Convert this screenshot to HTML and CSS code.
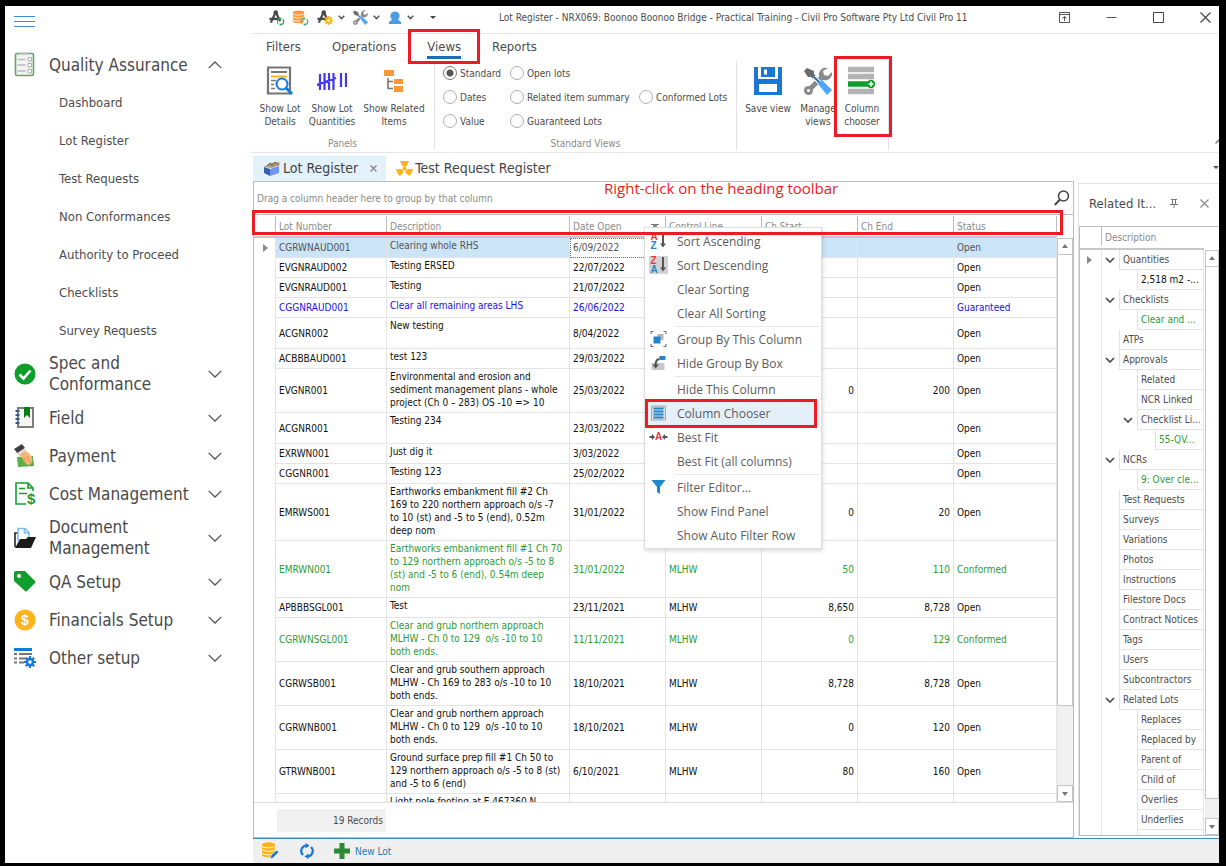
FILE: index.html
```html
<!DOCTYPE html>
<html lang="en">
<head>
    <meta charset="UTF-8">
    <meta name="viewport" content="width=device-width, initial-scale=1.0">
    <title>Lot Register - Civil Pro</title>
    <link rel="stylesheet" href="styles.css">
</head>
<body>
    <!-- shared symbols -->
    <svg class="symbols" width="0" height="0">
        <symbol id="chev" viewBox="0 0 14 8"><path d="M0.7 0.9 7 7l6.300-6.100" fill="none" stroke="#555" stroke-width="1.300"/></symbol>
        <symbol id="caret" viewBox="0 0 7 5"><path d="M0.700 0.800 3.500 3.600 6.300 0.800" fill="none" stroke="#555" stroke-width="1.500"/></symbol>
        <symbol id="tree-chev" viewBox="0 0 10 6"><path d="M1 1l4 4 4-4" fill="none" stroke="#444" stroke-width="1.600"/></symbol>
        <symbol id="compass" viewBox="0 0 16 16">
            <path d="M6.800 3 2 13.500M7.500 3l4.500 9M0.500 9.500h11" stroke="#4a4a4a" stroke-width="2.400" fill="none"/>
            <circle cx="7.200" cy="2.800" r="2.500" fill="#4a4a4a"/>
        </symbol>
        <symbol id="tools" viewBox="0 0 28 28">
            <path d="M4 24 18 10" stroke="#8a8a8a" stroke-width="5"/>
            <path d="M24 1a7 7 0 0 0-9 8l4 4a7 7 0 0 0 9-8l-4 4-4-1-1-4z" fill="#8a8a8a"/>
            <circle cx="4.500" cy="23.500" r="4.500" fill="#8a8a8a"/><circle cx="4.500" cy="23.500" r="1.500" fill="#fff"/>
            <path d="M0 4 3 1l7 3v3l3 3-3 3-3-3H4z" fill="#6b6b6b"/>
            <path d="M10 10l8 8" stroke="#fff" stroke-width="4"/>
            <path d="M10 10l8 8" stroke="#1f6fc0" stroke-width="2"/>
            <path d="M14 17l4-4 10 10-5 5z" fill="#4fa8ff"/>
        </symbol>
        <symbol id="database" viewBox="0 0 14 16">
            <path d="M0 2.500v10.500c0 3 13 3 13 0V2.500z" fill="currentColor"/>
            <ellipse cx="6.500" cy="2.500" rx="6.500" ry="2.200" fill="currentColor"/>
            <path d="M0 4c1 2.300 12 2.300 13 0M0 7.500c1 2.300 12 2.300 13 0M0 11c1 2.300 12 2.300 13 0" fill="none" stroke="#fff" stroke-width="0.900"/>
        </symbol>
        <symbol id="refresh" viewBox="0 0 16 16">
            <path d="M7 2.500a5.500 5.500 0 0 0-3 9.500M9 13.500a5.500 5.500 0 0 0 3-9.500" fill="none" stroke="currentColor" stroke-width="2.200"/>
            <path d="M6.500 0v5.500L10.500 2.500zM9.500 16v-5.500L5.500 13.500z" fill="currentColor"/>
        </symbol>
        <symbol id="gear" viewBox="0 0 12 12">
            <path d="M6 0v12M0 6h12M1.800 1.800l8.400 8.400M10.200 1.800l-8.400 8.400" stroke="currentColor" stroke-width="2.200"/>
            <circle cx="6" cy="6" r="4.200" fill="currentColor"/><circle cx="6" cy="6" r="1.800" fill="#fff"/>
        </symbol>
    </svg>

    <div class="window">
        <nav class="sidebar">
            <button class="hamburger" aria-label="Menu"><i></i><i></i><i></i></button>
            <a class="nav-item" href="#">
                <svg width="22" height="26" viewBox="0 0 22 26"><rect x="1.500" y="1.500" width="18" height="22" rx="1.500" fill="#f3f3f3" stroke="#5fa86a" stroke-width="1.600"/><path d="M6 1.500h9" stroke="#bbb" stroke-width="2"/><path d="M3.500 7.500h8M3.500 13h8M3.500 19h8" stroke="#bbb" stroke-width="1.600"/><path d="M14 5.500h3.500v3.500H14zM14 11.500h3.500V15H14zM14 17.500h3.500V21H14z" fill="#fff" stroke="#aaa"/></svg>
                <span>Quality Assurance</span>
                <svg class="chev up" width="14" height="8"><use href="#chev"/></svg>
            </a>
            <div class="sub-nav">
                <a href="#">Dashboard</a>
                <a href="#">Lot Register</a>
                <a href="#">Test Requests</a>
                <a href="#">Non Conformances</a>
                <a href="#">Authority to Proceed</a>
                <a href="#">Checklists</a>
                <a href="#">Survey Requests</a>
            </div>
            <a class="nav-item tall" href="#">
                <svg width="22" height="22" viewBox="0 0 22 22"><circle cx="11" cy="11" r="10.500" fill="#0f9d2c"/><path d="M5.500 11.500l4 4 7-8" fill="none" stroke="#fff" stroke-width="2.600"/></svg>
                <span>Spec and Conformance</span>
                <svg class="chev" width="14" height="8"><use href="#chev"/></svg>
            </a>
            <a class="nav-item" href="#">
                <svg width="22" height="24" viewBox="0 0 22 24"><rect x="4" y="2" width="15" height="19" fill="#f6f6f6" stroke="#7d7d7d" stroke-width="2"/><path d="M10 1h6v11l-3-3-3 3z" fill="#087d14"/><path d="M1.500 5h4M1.500 9h4M1.500 13h4M1.500 17h4" stroke="#2b5f8c" stroke-width="2"/></svg>
                <span>Field</span>
                <svg class="chev" width="14" height="8"><use href="#chev"/></svg>
            </a>
            <a class="nav-item" href="#">
                <svg width="22" height="24" viewBox="0 0 22 24"><path d="M3 13l16-1 1 10-16 1z" fill="#58b048"/><path d="M4 10l5-4c4 1 8 4 9 8 1 4-1 7-4 7-3-1-4-3-5-6z" fill="#f7b778"/><path d="M10 13l2 7M13 12l3 7" stroke="#d98b48" stroke-width="0.800"/><path d="M0 5 8 0l3 4-7 6z" fill="#3c3c44"/><path d="M3 9l8-5 1 2-7 5z" fill="#ddd"/></svg>
                <span>Payment</span>
                <svg class="chev" width="14" height="8"><use href="#chev"/></svg>
            </a>
            <a class="nav-item" href="#">
                <svg width="22" height="24" viewBox="0 0 22 24"><path d="M12 22H2V1h12l5 5v3M14 1v5h5M5 6.500h6M5 11.500h8" fill="none" stroke="#15a032" stroke-width="1.600"/><text x="13" y="22" class="dollar-green">$</text></svg>
                <span>Cost Management</span>
                <svg class="chev" width="14" height="8"><use href="#chev"/></svg>
            </a>
            <a class="nav-item tall" href="#">
                <svg width="22" height="22" viewBox="0 0 22 22"><path d="M1 20V6h3" fill="none" stroke="#222" stroke-width="1.600"/><path d="M4 14V1.500h7l4 4V14" fill="#fff" stroke="#7fbdf0" stroke-width="1.600"/><path d="M10.500 1v5h5" fill="none" stroke="#7fbdf0" stroke-width="1.600"/><path d="M1 21l5-9h6l2-2h8l-5 11z" fill="#1c1c1c"/></svg>
                <span>Document Management</span>
                <svg class="chev" width="14" height="8"><use href="#chev"/></svg>
            </a>
            <a class="nav-item" href="#">
                <svg width="22" height="22" viewBox="0 0 22 22"><path d="M0 2Q0 0 2 0h9l10 10q1 1 0 2l-8 8q-1 1-2 0L0 10z" fill="#0f9d2c"/><circle cx="5" cy="5" r="2" fill="#fff"/></svg>
                <span>QA Setup</span>
                <svg class="chev" width="14" height="8"><use href="#chev"/></svg>
            </a>
            <a class="nav-item" href="#">
                <svg width="22" height="22" viewBox="0 0 22 22"><circle cx="11" cy="11" r="10.500" fill="#fcb31c"/><text x="11" y="16" text-anchor="middle" class="dollar-white">$</text></svg>
                <span>Financials Setup</span>
                <svg class="chev" width="14" height="8"><use href="#chev"/></svg>
            </a>
            <a class="nav-item" href="#">
                <svg width="22" height="22" viewBox="0 0 22 22"><path d="M0 2.500h18" stroke="#1878d8" stroke-width="3"/><path d="M0 7h3M5 7h13M0 11.500h3M5 11.500h7M0 15.500h3M5 15.500h5" stroke="#777" stroke-width="2.200"/><svg x="10" y="9" width="12" height="12" color="#1878d8"><use href="#gear"/></svg></svg>
                <span>Other setup</span>
                <svg class="chev" width="14" height="8"><use href="#chev"/></svg>
            </a>
        </nav>

        <main class="main">
            <header class="titlebar">
                <div class="quick">
                    <button aria-label="Sync"><svg width="16" height="16" viewBox="0 0 16 16"><use href="#compass" width="15" height="15"/><svg x="7" y="7" width="9" height="9" color="#2aa84a"><use href="#refresh"/></svg></svg></button>
                    <button aria-label="Reload data"><svg width="16" height="16" viewBox="0 0 16 16"><svg width="12" height="14" color="#ff9a3c"><use href="#database"/></svg><svg x="7" y="7" width="9" height="9" color="#46ad68"><use href="#refresh"/></svg></svg></button>
                    <button class="drop" aria-label="Settings"><svg width="16" height="16" viewBox="0 0 16 16"><use href="#compass" width="15" height="15"/><svg x="7" y="6" width="9" height="9" color="#fcb31c"><use href="#gear"/></svg></svg><svg width="7" height="5"><use href="#caret"/></svg></button>
                    <button class="drop" aria-label="Tools"><svg width="15" height="15"><use href="#tools"/></svg><svg width="7" height="5"><use href="#caret"/></svg></button>
                    <button class="drop" aria-label="User"><svg width="14" height="14" viewBox="0 0 14 14"><circle cx="7" cy="5" r="4.600" fill="#4a9ce0"/><path d="M1 13v-2l4-3h4l4 3v2z" fill="#4a9ce0"/></svg><svg width="7" height="5"><use href="#caret"/></svg></button>
                    <button class="more" aria-label="Customise"><svg width="6" height="3" viewBox="0 0 6 3"><path d="M0 0h6L3 3z" fill="#444"/></svg></button>
                </div>
                <h1>Lot Register - NRX069: Boonoo Boonoo Bridge - Practical Training - Civil Pro Software Pty Ltd Civil Pro 11</h1>
                <div class="win-buttons">
                    <button aria-label="Ribbon options"><svg width="11" height="11" viewBox="0 0 11 11"><path d="M0.500 0.500h10v10H.5zM0.500 2.500h10M5.500 9V4.500M3.500 6.500l2-2 2 2" fill="none" stroke="#555"/></svg></button>
                    <button aria-label="Minimise"><svg width="11" height="11" viewBox="0 0 11 11"><path d="M0.500 5.500h10" stroke="#555"/></svg></button>
                    <button aria-label="Maximise"><svg width="11" height="11" viewBox="0 0 11 11"><path d="M0.500 0.500h10v10H.5z" fill="none" stroke="#444"/></svg></button>
                    <button aria-label="Close"><svg width="11" height="11" viewBox="0 0 11 11"><path d="M0.500 0.500l10 10M10.500 0.500l-10 10" stroke="#444" stroke-width="1.200"/></svg></button>
                </div>
            </header>

            <div class="ribbon-tabs">
                <a href="#">Filters</a>
                <a href="#">Operations</a>
                <a href="#" class="active">Views<b class="mark mark-views"></b></a>
                <a href="#">Reports</a>
            </div>

            <div class="ribbon">
                <section class="group">
                    <div class="group-body">
                        <button class="big">
                            <svg width="28" height="30" viewBox="0 0 28 30"><path d="M2 1.500h22v26H2z" fill="#fff" stroke="#757575" stroke-width="2.200"/><path d="M5 6h16" stroke="#777" stroke-width="2"/><path d="M5 10.500h16" stroke="#fcb31c" stroke-width="2"/><path d="M5 14.500h5M5 18.500h3M5 22.500h4" stroke="#777" stroke-width="1.600"/><circle cx="16" cy="18" r="5.500" fill="#fff" stroke="#1878d8" stroke-width="2"/><path d="M20 22l6 6" stroke="#1878d8" stroke-width="3"/></svg>
                            <span>Show Lot<br>Details</span>
                        </button>
                        <button class="big">
                            <svg width="30" height="30" viewBox="0 0 30 30"><path d="M3 8v16M7.500 7v17M12 7v17M16.500 7v17M24 7v14M29 7v14M0 19l19-7" fill="none" stroke="#4338f0" stroke-width="2.200"/></svg>
                            <span>Show Lot<br>Quantities</span>
                        </button>
                        <button class="big wide">
                            <svg width="20" height="30" viewBox="0 0 20 30"><path d="M0 4h10v6H0zM10 13h9v5h-9zM10 20h9v6h-9z" fill="#fb963a"/><path d="M4 12v11M4 15.500h5M4 22.500h5" fill="none" stroke="#777" stroke-width="1.600"/></svg>
                            <span>Show Related<br>Items</span>
                        </button>
                    </div>
                    <div class="group-label">Panels</div>
                </section>
                <section class="group">
                    <div class="group-body radios">
                        <label><input type="radio" name="view" checked>Standard</label>
                        <label><input type="radio" name="view">Open lots</label>
                        <span></span>
                        <label><input type="radio" name="view">Dates</label>
                        <label><input type="radio" name="view">Related item summary</label>
                        <label><input type="radio" name="view">Conformed Lots</label>
                        <label><input type="radio" name="view">Value</label>
                        <label><input type="radio" name="view">Guaranteed Lots</label>
                    </div>
                    <div class="group-label">Standard Views</div>
                </section>
                <section class="group">
                    <div class="group-body">
                        <button class="big medium">
                            <svg width="28" height="30" viewBox="0 0 28 30"><path d="M0 1h28v28H0z" fill="#1878d8"/><path d="M4 0h20v13H4zM5 18h18v8H5z" fill="#fff"/><path d="M7 1h14v10H7z" fill="#1878d8"/><path d="M10 3.500h3v5h-3z" fill="#fff"/></svg>
                            <span>Save view</span>
                        </button>
                        <button class="big narrow">
                            <svg width="28" height="30"><use href="#tools"/></svg>
                            <span>Manage<br>views</span>
                        </button>
                        <button class="big narrow">
                            <svg width="28" height="30" viewBox="0 0 28 30"><path d="M0 3.500h26M0 10.500h26M0 25.500h26" stroke="#b3b3b3" stroke-width="5.500"/><path d="M0 18h20" stroke="#0f9d2c" stroke-width="5.500"/><circle cx="23" cy="18" r="4.200" fill="#0f9d2c"/><path d="M23 15.500v5M20.500 18h5" stroke="#fff" stroke-width="1.600"/></svg>
                            <span>Column<br>chooser</span>
                            <b class="mark mark-chooser"></b>
                        </button>
                    </div>
                </section>
                <svg class="collapse" width="9" height="6" viewBox="0 0 9 6"><path d="M0.500 5.500l4-4 4 4" fill="none" stroke="#777" stroke-width="1.400"/></svg>
            </div>

            <div class="doc-tabs">
                <a href="#" class="active">
                    <svg width="18" height="16" viewBox="0 0 18 16"><path d="M1 6l6-4 9-1 1 3-8 3z" fill="#b59b7a"/><path d="M4 5l3-3 2 3 3-4 3 3" fill="none" stroke="#75614a"/><path d="M1 6l6 2v7l-6-3z" fill="#3c5fb0"/><path d="M7 8l9-3v7l-9 3z" fill="#6f97f2"/></svg>
                    Lot Register
                    <svg class="close" width="7" height="7" viewBox="0 0 7 7"><path d="M0.500 0.500l6 6M6.500 0.500l-6 6" stroke="#888" stroke-width="1.400"/></svg>
                </a>
                <a href="#">
                    <svg width="17" height="17" viewBox="0 0 17 17"><circle cx="8.500" cy="8.500" r="2" fill="#fcb31c"/><path d="M4 1h9l-2.500 5.500h-4zM0 9h5.500L8 12l-4 4Q1 14 0 9zM17 9h-5.500L9 12l4 4Q16 14 17 9z" fill="#fcb31c"/></svg>
                    Test Request Register
                </a>
                <svg class="tab-menu" width="6" height="3" viewBox="0 0 6 3"><path d="M0 0h6L3 3z" fill="#555"/></svg>
            </div>

            <div class="workspace">
                <section class="lots">
                    <div class="group-panel">
                        <span>Drag a column header here to group by that column</span>
                        <p class="note">Right-click on the heading toolbar</p>
                        <button class="find" aria-label="Find"><svg width="16" height="16" viewBox="0 0 16 16"><circle cx="9.500" cy="6" r="5" fill="none" stroke="#444" stroke-width="1.500"/><path d="M6 9.500.8 15" stroke="#444" stroke-width="2"/></svg></button>
                    </div>
                    <div class="table-area">
                        <div class="table-clip">
                            <table class="lot-table">
                                <colgroup><col class="c-mark"><col class="c-lot"><col><col class="c-std"><col class="c-std"><col class="c-std"><col class="c-std"><col class="c-status"></colgroup>
                                <thead>
                                    <tr>
                                        <th><span></span></th>
                                        <th><span>Lot Number</span></th>
                                        <th><span>Description</span></th>
                                        <th><span class="sorted">Date Open</span></th>
                                        <th><span>Control Line</span></th>
                                        <th><span>Ch Start</span></th>
                                        <th><span>Ch End</span></th>
                                        <th><span>Status</span></th>
                                    </tr>
                                </thead>
                                <tbody>
                                    <tr class="selected"><td><i class="pointer"></i></td><td>CGRWNAUD001</td><td>Clearing whole RHS</td><td class="focus">6/09/2022</td><td></td><td></td><td></td><td>Open</td></tr>
                                    <tr><td></td><td>EVGNRAUD002</td><td>Testing ERSED</td><td>22/07/2022</td><td></td><td></td><td></td><td>Open</td></tr>
                                    <tr><td></td><td>EVGNRAUD001</td><td>Testing</td><td>21/07/2022</td><td></td><td></td><td></td><td>Open</td></tr>
                                    <tr class="guaranteed"><td></td><td>CGGNRAUD001</td><td>Clear all remaining areas LHS</td><td>26/06/2022</td><td></td><td></td><td></td><td>Guaranteed</td></tr>
                                    <tr class="two-line"><td></td><td>ACGNR002</td><td>New testing</td><td>8/04/2022</td><td></td><td></td><td></td><td>Open</td></tr>
                                    <tr><td></td><td>ACBBBAUD001</td><td>test 123</td><td>29/03/2022</td><td></td><td></td><td></td><td>Open</td></tr>
                                    <tr><td></td><td>EVGNR001</td><td>Environmental and erosion and<br>sediment management plans - whole<br>project (Ch 0 – 283) OS -10 =&gt; 10</td><td>25/03/2022</td><td></td><td>0</td><td>200</td><td>Open</td></tr>
                                    <tr class="two-line"><td></td><td>ACGNR001</td><td>Testing 234</td><td>23/03/2022</td><td></td><td></td><td></td><td>Open</td></tr>
                                    <tr><td></td><td>EXRWN001</td><td>Just dig it</td><td>3/03/2022</td><td></td><td></td><td></td><td>Open</td></tr>
                                    <tr><td></td><td>CGGNR001</td><td>Testing 123</td><td>25/02/2022</td><td></td><td></td><td></td><td>Open</td></tr>
                                    <tr><td></td><td>EMRWS001</td><td>Earthworks embankment fill #2 Ch<br>169 to 220 northern approach o/s -7<br>to 10 (st) and -5 to 5 (end), 0.52m<br>deep nom</td><td>31/01/2022</td><td></td><td>0</td><td>20</td><td>Open</td></tr>
                                    <tr class="conformed"><td></td><td>EMRWN001</td><td>Earthworks embankment fill #1 Ch 70<br>to 129 northern approach o/s -5 to 8<br>(st) and -5 to 6 (end), 0.54m deep<br>nom</td><td>31/01/2022</td><td>MLHW</td><td>50</td><td>110</td><td>Conformed</td></tr>
                                    <tr><td></td><td>APBBBSGL001</td><td>Test</td><td>23/11/2021</td><td>MLHW</td><td>8,650</td><td>8,728</td><td>Open</td></tr>
                                    <tr class="conformed"><td></td><td>CGRWNSGL001</td><td>Clear and grub northern approach<br>MLHW - Ch 0 to 129&nbsp; o/s -10 to 10<br>both ends.</td><td>11/11/2021</td><td>MLHW</td><td>0</td><td>129</td><td>Conformed</td></tr>
                                    <tr><td></td><td>CGRWSB001</td><td>Clear and grub southern approach<br>MLHW - Ch 169 to 283 o/s -10 to 10<br>both ends.</td><td>18/10/2021</td><td>MLHW</td><td>8,728</td><td>8,728</td><td>Open</td></tr>
                                    <tr><td></td><td>CGRWNB001</td><td>Clear and grub northern approach<br>MLHW - Ch 0 to 129&nbsp; o/s -10 to 10<br>both ends.</td><td>18/10/2021</td><td>MLHW</td><td>0</td><td>120</td><td>Open</td></tr>
                                    <tr><td></td><td>GTRWNB001</td><td>Ground surface prep fill #1 Ch 50 to<br>129 northern approach o/s -5 to 8 (st)<br>and -5 to 6 (end)</td><td>6/10/2021</td><td>MLHW</td><td>80</td><td>160</td><td>Open</td></tr>
                                    <tr class="two-line"><td></td><td></td><td>Light pole footing at E 467360 N</td><td></td><td></td><td></td><td></td><td></td></tr>
                                </tbody>
                            </table>
                        </div>
                        <div class="scrollbar"><i class="arrow up"></i><i class="thumb"></i><i class="arrow"></i></div>
                        <b class="mark mark-header"></b>
                    </div>
                    <div class="summary"><span>19 Records</span></div>

                    <div class="context-menu">
                        <button><svg width="18" height="18" viewBox="0 0 18 18"><text x="1" y="8" class="az red">A</text><text x="1" y="17" class="az blue">Z</text><path d="M13.500 1v12" stroke="#555" stroke-width="2"/><path d="M10.500 11.500h6l-3 4z" fill="#555"/></svg>Sort Ascending</button>
                        <button><svg class="checked" width="18" height="18" viewBox="0 0 18 18"><text x="1" y="8" class="az red">Z</text><text x="1" y="17" class="az blue">A</text><path d="M13.500 1v12" stroke="#555" stroke-width="2"/><path d="M10.500 11.500h6l-3 4z" fill="#555"/></svg>Sort Descending</button>
                        <button>Clear Sorting</button>
                        <button>Clear All Sorting</button>
                        <hr>
                        <button><svg width="16" height="16" viewBox="0 0 16 16"><path d="M0.500 3V.5H3M13 .5h2.500V3M15.500 13v2.500H13M3 15.500H.5V13" fill="none" stroke="#666"/><path d="M7 3h6v6H7z" fill="#b5b5b5"/><path d="M3 5.500h7v7H3z" fill="#1f87cd"/></svg>Group By This Column</button>
                        <button><svg width="16" height="16" viewBox="0 0 16 16"><path d="M1 8h13v7H1z" fill="#c8c8c8"/><path d="M9 1h6v4H9z" fill="#1f87cd"/><path d="M9 4Q5 4 5 11" fill="none" stroke="#555" stroke-width="2"/><path d="M2 9.500h6.500L5 13.500z" fill="#555"/></svg>Hide Group By Box</button>
                        <hr>
                        <button>Hide This Column</button>
                        <button class="hover"><svg width="16" height="16" viewBox="0 0 16 16"><path d="M1 1h14v14H1z" fill="#ddd" stroke="#aaa"/><path d="M3 3.500h10M3 6.500h10M3 9.500h10M3 12.500h10" stroke="#1f87cd" stroke-width="2.200"/></svg>Column Chooser<b class="mark mark-item"></b></button>
                        <button><svg width="18" height="16" viewBox="0 0 18 16"><path d="M0 8h3M18 8h-3" stroke="#555" stroke-width="2"/><path d="M2.500 5v6l3-3zM15.500 5v6l-3-3z" fill="#555"/><text x="9" y="11" text-anchor="middle" class="az red">A</text></svg>Best Fit</button>
                        <button>Best Fit (all columns)</button>
                        <hr>
                        <button><svg width="16" height="16" viewBox="0 0 16 16"><path d="M1 1h14L9.500 8v7l-3-2V8z" fill="#1f87cd"/></svg>Filter Editor...</button>
                        <button>Show Find Panel</button>
                        <button>Show Auto Filter Row</button>
                    </div>
                </section>

                <aside class="related">
                    <div class="related-title">
                        <h2>Related It...</h2>
                        <button aria-label="Pin"><svg width="8" height="9" viewBox="0 0 8 9"><path d="M1 .5h6M2.500 .5v4.500M5.500 .5v4.500M0 5.500h8M4 5.500V9" fill="none" stroke="#777"/></svg></button>
                        <button aria-label="Close"><svg width="9" height="9" viewBox="0 0 9 9"><path d="M0.500 0.500l8 8M8.500 0.500l-8 8" stroke="#888" stroke-width="1.200"/></svg></button>
                    </div>
                    <div class="tree-area">
                        <div class="tree">
                            <div class="tree-head">Description</div>
                            <ul>
                                <li class="open"><i class="pointer"></i><span>Quantities</span></li>
                                <li class="l1 black"><span>2,518 m2 -...</span></li>
                                <li class="open"><span>Checklists</span></li>
                                <li class="l1 green"><span>Clear and ...</span></li>
                                <li><span>ATPs</span></li>
                                <li class="open"><span>Approvals</span></li>
                                <li class="l1"><span>Related</span></li>
                                <li class="l1"><span>NCR Linked</span></li>
                                <li class="l1 open"><span>Checklist Li...</span></li>
                                <li class="l2 green"><span>55-QV...</span></li>
                                <li class="open"><span>NCRs</span></li>
                                <li class="l1 green"><span>9: Over cle...</span></li>
                                <li><span>Test Requests</span></li>
                                <li><span>Surveys</span></li>
                                <li><span>Variations</span></li>
                                <li><span>Photos</span></li>
                                <li><span>Instructions</span></li>
                                <li><span>Filestore Docs</span></li>
                                <li><span>Contract Notices</span></li>
                                <li><span>Tags</span></li>
                                <li><span>Users</span></li>
                                <li><span>Subcontractors</span></li>
                                <li class="open"><span>Related Lots</span></li>
                                <li class="l1"><span>Replaces</span></li>
                                <li class="l1"><span>Replaced by</span></li>
                                <li class="l1"><span>Parent of</span></li>
                                <li class="l1"><span>Child of</span></li>
                                <li class="l1"><span>Overlies</span></li>
                                <li class="l1"><span>Underlies</span></li>
                                <li class="l1"><span></span></li>
                            </ul>
                        </div>
                        <div class="scrollbar"><i class="arrow up"></i><i class="thumb"></i><i class="arrow"></i></div>
                    </div>
                </aside>
            </div>

            <footer class="statusbar">
                <button aria-label="Edit data"><svg width="18" height="18" viewBox="0 0 18 18"><svg width="14" height="16" color="#fcb31c"><use href="#database"/></svg><path d="M8 17l1-4 6-5 2 2-6 6z" fill="#1878d8" stroke="#efefef" stroke-width="0.800"/></svg></button>
                <button aria-label="Refresh"><svg width="16" height="16" color="#1878d8"><use href="#refresh"/></svg></button>
                <button class="new-lot"><svg width="16" height="16" viewBox="0 0 16 16"><path d="M8 0v16M0 8h16" stroke="#2c8a36" stroke-width="5"/></svg>New Lot</button>
            </footer>
        </main>
    </div>

    <script>
        // put the expander in front of every open tree node
        document.querySelectorAll('.tree li.open span').forEach(function (span) {
            span.insertAdjacentHTML('beforebegin', '<svg class="expander" width="10" height="6"><use href="#tree-chev"/></svg>');
        });
    </script>
</body>
</html>
```
FILE: styles.css
```css
* {
    box-sizing: border-box;
}
body {
    margin: 0;
    padding: 6px 7px 3px 5px;
    height: 100vh;
    background: #000;
    color: #4c4c4c;
    font-family: "DejaVu Sans Condensed", "Noto Sans", sans-serif;
    font-size: 10px;
    line-height: 13px;
}
button {
    padding: 0;
    border: 0;
    background: none;
    color: inherit;
    font: inherit;
    cursor: pointer;
}
a {
    color: inherit;
    text-decoration: none;
}
svg {
    display: block;
    flex: none;
}
.symbols {
    position: absolute;
}
.window {
    display: flex;
    height: 100%;
    background: #fff;
    overflow: hidden;
}

/* red call-outs */
.mark {
    position: absolute;
    border: 3px solid #ed1c24;
    pointer-events: none;
    z-index: 5;
}

/* sidebar */
.sidebar {
    flex: none;
    width: 246px;
    padding: 10px 29px 0 9px;
}
.hamburger {
    display: flex;
    flex-direction: column;
    gap: 4px;
    width: 21px;
    height: 30px;
}
.hamburger i {
    height: 1px;
    width: 21px;
    background: #3c8fd6;
}
.nav-item {
    display: flex;
    align-items: center;
    height: 38px;
    font-size: 17px;
    line-height: 21px;
    color: #4a4a4a;
}
.nav-item.tall {
    height: 50px;
}
.nav-item span {
    flex: 1;
    margin-left: 13px;
    padding-right: 10px;
    white-space: nowrap;
}
.nav-item.tall span {
    white-space: normal;
    padding-right: 40px;
}
.chev.up {
    transform: rotate(180deg);
}
.sub-nav {
    display: flex;
    flex-direction: column;
    height: 265px;
    padding-left: 45px;
    font-size: 13px;
}
.sub-nav a {
    flex: 1;
    display: flex;
    align-items: center;
}

/* title bar */
.main {
    flex: 1;
    min-width: 0;
    display: flex;
    flex-direction: column;
}
.titlebar {
    display: flex;
    align-items: center;
    height: 28px;
    padding: 0 8px 8px 18px;
    border-bottom: 1px solid #e6e6e6;
}
.quick {
    display: flex;
    align-items: center;
    gap: 8px;
    width: 190px;
    padding-top: 4px;
}
.quick .drop {
    display: flex;
    align-items: center;
    gap: 5px;
}
.quick .more {
    margin-left: 8px;
}
.titlebar h1 {
    flex: 1;
    margin: 0;
    padding: 3px 0 0 40px;
    font-size: 10px;
    font-weight: normal;
    white-space: nowrap;
}
.win-buttons {
    display: flex;
    gap: 36px;
    padding-top: 4px;
}

/* ribbon */
.ribbon-tabs {
    display: flex;
    gap: 31px;
    padding-left: 15px;
    height: 27px;
    font-size: 13px;
}
.ribbon-tabs a {
    position: relative;
    height: 25px;
    line-height: 26px;
}
.ribbon-tabs .active {
    border-bottom: 3px solid #1c6fbf;
}
.mark-views {
    inset: -5px -19px -8px -19px;
}
.ribbon {
    position: relative;
    display: flex;
    height: 92px;
    border-bottom: 1px solid #e6e6e6;
}
.group {
    display: flex;
    flex-direction: column;
    height: 89px;
    border-right: 1px solid #e2e2e2;
}
.group-body {
    display: flex;
    flex: 1;
    padding: 5px 4px 0 3px;
}
.group-label {
    height: 13px;
    color: #8a8a8a;
    text-align: center;
}
.big {
    position: relative;
    display: flex;
    flex-direction: column;
    align-items: center;
    gap: 6px;
    width: 52px;
    height: 66px;
    white-space: nowrap;
}
.big.wide {
    width: 72px;
}
.big.medium {
    width: 56px;
}
.big.narrow {
    width: 44px;
}
.mark-chooser {
    inset: -10px -8px -5px -6px;
}
.radios {
    display: grid;
    grid-template-columns: 67px 129px 89px;
    grid-auto-rows: 24px;
    padding: 0 8px;
}
.radios label {
    display: flex;
    align-items: center;
    gap: 3px;
    white-space: nowrap;
}
.radios input {
    appearance: none;
    width: 14px;
    height: 14px;
    margin: 0;
    border: 1px solid #b0b0b0;
    border-radius: 50%;
    background: #fff;
}
.radios input:checked {
    border-color: #777;
    background: radial-gradient(circle, #555 3px, #fff 4px);
}
.collapse {
    position: absolute;
    right: -5px;
    bottom: 8px;
}

/* document tabs */
.doc-tabs {
    display: flex;
    align-items: center;
    height: 28px;
    padding: 3px 0 0 2px;
    font-size: 14px;
    color: #444;
}
.doc-tabs a {
    display: flex;
    align-items: center;
    gap: 2px;
    height: 25px;
    padding: 0 9px 0 10px;
    white-space: nowrap;
}
.doc-tabs .active {
    background: #e3f1fa;
}
.doc-tabs .close {
    margin-left: 10px;
}
.tab-menu {
    margin: 0 0 3px auto;
}

/* lot register */
.workspace {
    flex: 1;
    min-height: 0;
    display: flex;
    gap: 4px;
    padding: 0 0 0 2px;
}
.lots {
    position: relative;
    flex: 1;
    min-width: 0;
    display: flex;
    flex-direction: column;
    border: 1px solid #bdbdbd;
}
.group-panel {
    position: relative;
    display: flex;
    align-items: center;
    justify-content: space-between;
    height: 32px;
    padding: 0 3px;
    color: #8a8a8a;
}
.note {
    position: absolute;
    left: 350px;
    top: 0;
    margin: 0;
    color: #ed1c24;
    font-family: "Open Sans", sans-serif;
    font-size: 15px;
}
.table-area {
    position: relative;
    flex: 1;
    min-height: 0;
    display: flex;
    border-top: 1px solid #bdbdbd;
    border-bottom: 1px solid #dcdcdc;
}
.table-clip {
    flex: 1;
    overflow: hidden;
}
.mark-header {
    inset: -5px 10px auto -2px;
    height: 25px;
}
.lot-table {
    width: 100%;
    table-layout: fixed;
    border-collapse: separate;
    border-spacing: 0;
    color: #111;
}
.c-mark {
    width: 22px;
}
.c-lot {
    width: 111px;
}
.c-std {
    width: 96px;
}
.c-status {
    width: 103px;
}
.lot-table th {
    height: 23px;
    padding: 1px 0;
    border-bottom: 2px solid #c8c8c8;
    color: #8a8a8a;
    font-weight: normal;
    text-align: left;
}
.lot-table th span {
    display: block;
    height: 19px;
    padding-left: 3px;
    border-right: 1px solid #bdbdbd;
    line-height: 21px;
}
.lot-table th .sorted {
    background: linear-gradient(#777, #777) no-repeat 81px 8px / 8px 1px, linear-gradient(#888, #888) no-repeat 83px 9px / 4px 2px;
}
.lot-table td {
    height: 20px;
    padding: 0 3px;
    border-right: 1px solid #e4e4e4;
    border-bottom: 1px solid #e4e4e4;
    white-space: nowrap;
    overflow: hidden;
}
.lot-table td:first-child {
    border-bottom: 0;
}
.lot-table td:nth-child(3) {
    padding: 1px 3px 3px;
    vertical-align: top;
}
.lot-table td:nth-child(6),
.lot-table td:nth-child(7) {
    text-align: right;
}
.lot-table .two-line td {
    height: 31px;
}
.lot-table .selected td:not(:first-child) {
    background: #cce4f7;
    color: #555;
}
.lot-table .selected .focus {
    background: #fff !important;
    outline: 1px dotted #777;
    outline-offset: -1px;
}
.guaranteed {
    color: #1d10f0;
}
.conformed,
.green {
    color: #2e9a34;
}
.pointer {
    display: block;
    margin-left: 6px;
    width: 0;
    border: 4px solid transparent;
    border-left: 5px solid #888;
    border-right: 0;
}
.summary {
    height: 34px;
    padding: 6px 23px;
}
.summary span {
    display: block;
    width: 109px;
    height: 23px;
    padding-right: 3px;
    background: #f0f0f0;
    line-height: 23px;
    text-align: right;
}

/* scrollbars */
.scrollbar {
    flex: none;
    display: flex;
    flex-direction: column;
    width: 16px;
    margin-top: 23px;
    background: #f0f0f0;
}
.scrollbar .arrow {
    display: flex;
    align-items: center;
    justify-content: center;
    height: 17px;
    border: 1px solid #c4c4c4;
    background: #fff;
}
.scrollbar .arrow::after {
    content: "";
    border: 3px solid transparent;
    border-top: 4px solid #777;
    border-bottom: 0;
}
.scrollbar .arrow.up {
    transform: rotate(180deg);
}
.scrollbar .thumb {
    height: 451px;
    margin-bottom: auto;
    border: 1px solid #c4c4c4;
    border-top: 0;
    background: #fff;
}

/* header context menu */
.context-menu {
    position: absolute;
    left: 390px;
    top: 45px;
    width: 178px;
    padding: 1px;
    border: 1px solid #dedede;
    background: #fff;
    box-shadow: 1px 2px 4px rgba(0, 0, 0, 0.15);
    color: #5c5c5c;
    font-family: "Open Sans", sans-serif;
    font-size: 12px;
    z-index: 2;
}
.context-menu button {
    position: relative;
    display: flex;
    align-items: center;
    width: 100%;
    height: 24px;
    padding-left: 31px;
    text-align: left;
}
.context-menu svg {
    width: 19px;
    margin: 0 9px 0 -28px;
}
.context-menu .checked {
    background: #d2d2d2;
}
.context-menu .hover {
    background: #e3f0f9;
}
.context-menu hr {
    height: 1px;
    margin: 1px 0 0 29px;
    border: 0;
    background: #e8e8e8;
}
.mark-item {
    inset: -2px 3px -3px -1px;
}
.az {
    font: bold 10px "Liberation Sans", sans-serif;
}
.red {
    fill: #e83a3f;
}
.blue {
    fill: #1f87cd;
}
.dollar-green {
    font: bold 15px "Liberation Sans", sans-serif;
    fill: #15a032;
}
.dollar-white {
    font: bold 14px "Liberation Sans", sans-serif;
    fill: #fff;
}

/* related items */
.related {
    flex: none;
    width: 141px;
    display: flex;
    flex-direction: column;
    margin: 2px 0;
    border-top: 1px solid #e2e2e2;
    border-left: 1px solid #e2e2e2;
}
.related-title {
    display: flex;
    align-items: center;
    gap: 22px;
    height: 42px;
    padding: 0 10px 3px;
}
.related-title h2 {
    flex: 1;
    margin: 0 -8px 0 0;
    font-size: 13px;
    font-weight: normal;
    white-space: nowrap;
}
.tree-area {
    flex: 1;
    min-height: 0;
    display: flex;
    border: solid #bdbdbd;
    border-width: 1px 0 1px 1px;
}
.tree {
    flex: 1;
    overflow: hidden;
}
.tree-head {
    height: 23px;
    margin-right: -2px;
    padding-left: 25px;
    border-bottom: 2px solid #c8c8c8;
    color: #8a8a8a;
    line-height: 21px;
    background: linear-gradient(#bdbdbd, #bdbdbd) no-repeat 21px 0 / 1px 19px;
}
.tree ul {
    margin: 0;
    padding: 0 0 0 39px;
    list-style: none;
    background: linear-gradient(#e4e4e4, #e4e4e4) no-repeat 21px 0 / 1px 100%;
}
.tree li {
    position: relative;
    height: 20px;
    white-space: nowrap;
}
.tree li.l1 {
    padding-left: 18px;
}
.tree li.l2 {
    padding-left: 36px;
}
.tree li span {
    display: block;
    height: 20px;
    padding-left: 3px;
    border: 1px solid #e4e4e4;
    border-top: 0;
    line-height: 20px;
}
.tree .black {
    color: #111;
}
.tree .expander {
    position: absolute;
    left: -14px;
    top: 7px;
}
.tree .l1 .expander {
    left: 4px;
}
.tree .pointer {
    position: absolute;
    left: -38px;
    top: 6px;
}
.related .scrollbar {
    width: 14px;
    margin-left: 1px;
}
.related .thumb {
    height: 532px;
}

/* status bar */
.statusbar {
    display: flex;
    align-items: center;
    gap: 19px;
    height: 25px;
    margin-left: 2px;
    padding-left: 9px;
    border-top: 1px solid #3b8ac9;
    background: #efefef;
    color: #2a78b8;
}
.new-lot {
    display: flex;
    align-items: center;
    gap: 5px;
}
```
